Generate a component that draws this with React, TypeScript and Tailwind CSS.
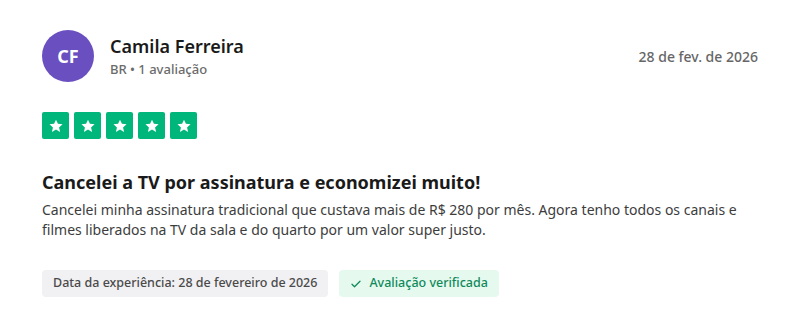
import React from "react";

const Star = () => (
  <div className="w-[27px] h-[27px] bg-[#00b67a] rounded-[2px] flex items-center justify-center">
    <svg width="16" height="16" viewBox="0 0 24 24" fill="white">
      <path d="M12 2.5l2.9 6.3 6.9.7-5.2 4.6 1.5 6.8L12 17.4l-6.1 3.5 1.5-6.8-5.2-4.6 6.9-.7z" />
    </svg>
  </div>
);

export default function App() {
  return (
    <div className="w-[800px] h-[326px] bg-white px-[42px] pt-[30px]" style={{ fontFamily: '"Segoe UI", "Noto Sans", "Open Sans", sans-serif' }}>
      <div className="flex items-center justify-between">
        <div className="flex items-center gap-4">
          <div className="w-[52px] h-[52px] rounded-full bg-[#6a4fc0] flex items-center justify-center text-white font-bold text-[18px]">CF</div>
          <div>
            <div className="text-[18px] font-semibold text-[#1a1a1a] leading-[24px]">Camila Ferreira</div>
            <div className="text-[13px] font-medium text-[#6b6b6b] leading-[20px] mt-[1px]">BR • 1 avaliação</div>
          </div>
        </div>
        <div className="text-[14px] font-medium text-[#666666]">28 de fev. de 2026</div>
      </div>
      <div className="flex gap-[5px] mt-[30px]">
        <Star /><Star /><Star /><Star /><Star />
      </div>
      <div className="mt-[30px] text-[18px] font-bold text-[#1a1a1a] leading-[26px]">Cancelei a TV por assinatura e economizei muito!</div>
      <div className="mt-[5px] text-[14px] text-[#3d3d3d] leading-[20px]">
        Cancelei minha assinatura tradicional que custava mais de R$ 280 por mês. Agora tenho todos os canais e<br />
        filmes liberados na TV da sala e do quarto por um valor super justo.
      </div>
      <div className="flex gap-[11px] mt-[30px]">
        <div className="h-[27px] px-[11px] rounded-[4px] bg-[#f1f1f3] text-[12.5px] font-medium text-[#4a4a4a] flex items-center">Data da experiência: 28 de fevereiro de 2026</div>
        <div className="h-[27px] px-[11px] rounded-[4px] bg-[#e6f9ef] text-[12.5px] font-medium text-[#0f8a5a] flex items-center gap-[7px]">
          <svg width="12" height="12" viewBox="0 0 24 24" fill="none" stroke="currentColor" strokeWidth="2.5" strokeLinecap="round" strokeLinejoin="round"><path d="M4 12.5l5 5L20 6.5" /></svg>
          Avaliação verificada
        </div>
      </div>
    </div>
  );
}
